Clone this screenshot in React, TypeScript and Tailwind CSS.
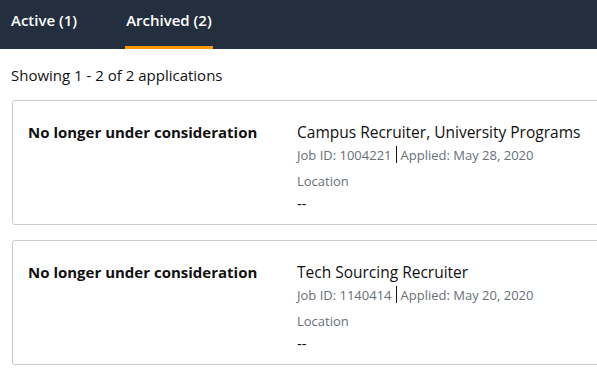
import React from 'react'

interface Application {
  id: string
  status: string
  title: string
  applied: string
  location: string
}

const apps: Application[] = [
  { id: '1004221', status: 'No longer under consideration', title: 'Campus Recruiter, University Programs', applied: 'May 28, 2020', location: '--' },
  { id: '1140414', status: 'No longer under consideration', title: 'Tech Sourcing Recruiter', applied: 'May 20, 2020', location: '--' },
]

function AppCard({ app }: { app: Application }) {
  return (
    <div className="w-[640px] h-[125px] border border-[#c6cbd2] rounded-[3px] bg-white flex pt-[21px] pl-[15px]">
      <div className="w-[269px] shrink-0 text-[15px] font-bold text-[#111] leading-[20px]">{app.status}</div>
      <div className="flex flex-col">
        <div className="text-[15.5px] text-[#111] leading-[20px]">{app.title}</div>
        <div className="mt-[4px] text-[13px] text-[#687078] leading-[16px] flex items-center">
          <span>Job ID: {app.id}</span>
          <span className="mx-[4px] w-px h-[17px] bg-[#111]" />
          <span>Applied: {app.applied}</span>
        </div>
        <div className="mt-[10px] text-[13px] text-[#687078] leading-[16px]">Location</div>
        <div className="mt-[4px] text-[15px] text-[#111] leading-[20px]">{app.location}</div>
      </div>
    </div>
  )
}

export default function App() {
  return (
    <div className="w-[597px] h-[379px] overflow-hidden bg-white" style={{ fontFamily: '"Open Sans", "Liberation Sans", sans-serif' }}>
      {/* Tabs */}
      <div className="h-[49px] bg-[#232f3e] flex items-stretch pl-[11px] gap-[48px]">
        <div className="flex items-center text-[15px] font-semibold text-white pb-[9px]">Active (1)</div>
        <div className="relative flex items-center text-[15px] font-semibold text-white pb-[9px] px-[1px]">
          Archived (2)
          <div className="absolute left-0 right-0 bottom-0 h-[3px] bg-[#ff9900]" />
        </div>
      </div>

      <div className="pl-[11px] pt-[15px] text-[15px] text-[#111] leading-[22px]">Showing 1 - 2 of 2 applications</div>

      <div className="pl-[12px] pt-[14px] flex flex-col gap-[15px]">
        {apps.map((a) => (
          <AppCard key={a.id} app={a} />
        ))}
      </div>
    </div>
  )
}
